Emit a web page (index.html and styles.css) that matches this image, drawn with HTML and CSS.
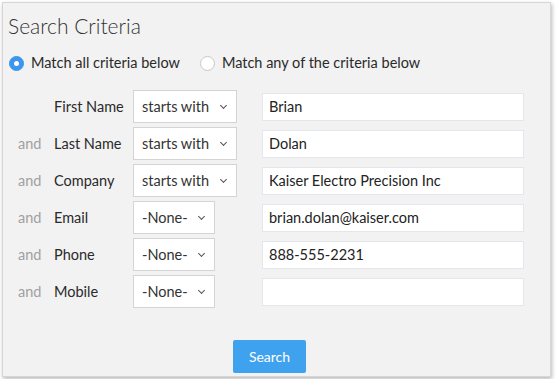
FILE: index.html
```html
<!DOCTYPE html>
<html lang="en">
<head>
  <meta charset="UTF-8" />
  <title>Search Criteria</title>
  <link rel="stylesheet" href="styles.css">
</head>
<body>

  <!-- Search panel -->
  <div class="panel">
    <h1>Search Criteria</h1>

    <!-- Match mode -->
    <div class="match-mode">
      <label class="radio"><span class="dot checked"></span>Match all criteria below</label>
      <label class="radio"><span class="dot"></span>Match any of the criteria below</label>
    </div>

    <!-- Criteria rows -->
    <div class="criteria">
      <span class="and"></span>
      <span class="field">First Name</span>
      <div class="select wide">starts with<span class="caret"></span></div>
      <div class="input">Brian</div>

      <span class="and">and</span>
      <span class="field">Last Name</span>
      <div class="select wide">starts with<span class="caret"></span></div>
      <div class="input">Dolan</div>

      <span class="and">and</span>
      <span class="field">Company</span>
      <div class="select wide">starts with<span class="caret"></span></div>
      <div class="input">Kaiser Electro Precision Inc</div>

      <span class="and">and</span>
      <span class="field">Email</span>
      <div class="select">-None-<span class="caret"></span></div>
      <div class="input">brian.dolan@kaiser.com</div>

      <span class="and">and</span>
      <span class="field">Phone</span>
      <div class="select">-None-<span class="caret"></span></div>
      <div class="input">888-555-2231</div>

      <span class="and">and</span>
      <span class="field">Mobile</span>
      <div class="select">-None-<span class="caret"></span></div>
      <div class="input"></div>
    </div>

    <div class="actions">
      <button class="search">Search</button>
    </div>
  </div>

</body>
</html>
```

FILE: styles.css
```css
/* Page */
body {
  margin: 0;
  background: #fff;
  font-family: 'Lato', 'Liberation Sans', sans-serif;
  color: #222;
}

/* Panel with light border and shadow */
.panel {
  margin: 2px;
  width: 547px;
  height: 373px;
  background: #f2f2f2;
  border: 1px solid #d6d6d6;
  box-shadow: 1px 2px 4px rgba(0, 0, 0, 0.28);
  box-sizing: content-box;
}

h1 {
  margin: 0;
  padding: 10px 0 0 5px;
  font-size: 21px;
  font-weight: 300;
  color: #333;
  line-height: 26px;
}

/* Radio options */
.match-mode {
  display: flex;
  gap: 20px;
  padding: 14px 0 0 6px;
}

.radio {
  display: flex;
  align-items: center;
  gap: 7px;
  font-size: 14.5px;
  line-height: 20px;
  color: #2a2a2a;
}

.dot {
  width: 13px;
  height: 13px;
  border-radius: 50%;
  border: 1px solid #c8c8c8;
  background: #fff;
  position: relative;
}

.dot.checked {
  background: #3d95ee;
  border-color: #3d95ee;
}

.dot.checked::after {
  content: '';
  position: absolute;
  left: 4px;
  top: 4px;
  width: 5px;
  height: 5px;
  border-radius: 50%;
  background: #fff;
}

/* Criteria grid */
.criteria {
  display: grid;
  grid-template-columns: 36px 79px 129px 262px;
  grid-auto-rows: 37px;
  align-items: center;
  padding: 15px 0 0 15px;
  font-size: 14.5px;
  color: #2a2a2a;
}

.and {
  color: #a0a0a0;
}

.select {
  height: 33px;
  width: 82px;
  box-sizing: border-box;
  background: #fff;
  border: 1px solid #d4d4d4;
  display: flex;
  align-items: center;
  justify-content: space-between;
  padding: 0 10px 0 8px;
  color: #333;
}

.select.wide {
  width: 104px;
}

.caret {
  width: 4px;
  height: 4px;
  border-right: 1px solid #555;
  border-bottom: 1px solid #555;
  transform: rotate(45deg);
  margin-top: -3px;
}

.input {
  height: 28px;
  box-sizing: border-box;
  background: #fff;
  border: 1px solid #e3e6ea;
  padding: 0 6px;
  line-height: 26px;
  color: #222;
}

/* Search button */
.actions {
  padding: 30px 0 0 230px;
}

.search {
  width: 73px;
  height: 33px;
  border: none;
  border-radius: 2px;
  background: #3fa2ee;
  color: #fff;
  font-family: inherit;
  font-size: 14px;
  cursor: pointer;
}
```
